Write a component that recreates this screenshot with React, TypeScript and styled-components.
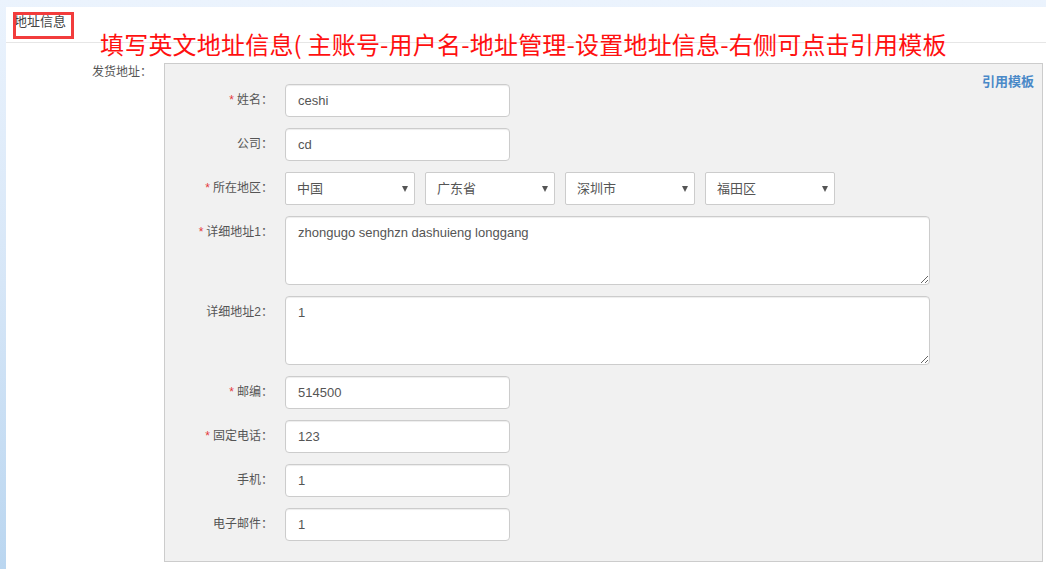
import styled, { createGlobalStyle } from 'styled-components';

const GlobalStyle = createGlobalStyle`
  html, body {
    margin: 0;
    padding: 0;
  }
  body {
    width: 1046px;
    height: 569px;
    overflow: hidden;
    background: linear-gradient(to bottom, #ebf3fd 0%, #d6e6f7 50%, #bad6f0 100%);
    font-family: "Liberation Sans", "Noto Sans CJK SC", sans-serif;
    font-size: 12px;
    color: #555;
  }
  * {
    box-sizing: border-box;
  }
`;

interface Field {
  label: string;
  required?: boolean;
  kind: 'input' | 'textarea' | 'region';
  value?: string;
}

const FIELDS: Field[] = [
  { label: '姓名', required: true, kind: 'input', value: 'ceshi' },
  { label: '公司', kind: 'input', value: 'cd' },
  { label: '所在地区', required: true, kind: 'region' },
  { label: '详细地址1', required: true, kind: 'textarea', value: 'zhongugo senghzn dashuieng longgang' },
  { label: '详细地址2', kind: 'textarea', value: '1' },
  { label: '邮编', required: true, kind: 'input', value: '514500' },
  { label: '固定电话', required: true, kind: 'input', value: '123' },
  { label: '手机', kind: 'input', value: '1' },
  { label: '电子邮件', kind: 'input', value: '1' },
];

const REGIONS = ['中国', '广东省', '深圳市', '福田区'];

const App = () => {
  return (
    <>
      <GlobalStyle />
      <Page>
        <Header>
          <Title>{'地址信息'}</Title>
        </Header>
        <HighlightBox />
        <Annotation>{'填写英文地址信息( 主账号-用户名-地址管理-设置地址信息-右侧可点击引用模板'}</Annotation>
        <Content>
          <SectionLabel>{'发货地址：'}</SectionLabel>
          <Panel>
            <TemplateLink href="#">{'引用模板'}</TemplateLink>
            {FIELDS.map((field) => (
              <FormRow key={field.label}>
                <Label>
                  {field.required && <Star>{'*'}</Star>}
                  {`${field.label}：`}
                </Label>
                {field.kind === 'input' && (
                  <TextInput defaultValue={field.value} />
                )}
                {field.kind === 'textarea' && (
                  <TextArea defaultValue={field.value} />
                )}
                {field.kind === 'region' && (
                  <RegionList>
                    {REGIONS.map((region) => (
                      <SelectWrap key={region}>
                        <Select defaultValue={region}>
                          <option value={region}>{region}</option>
                        </Select>
                      </SelectWrap>
                    ))}
                  </RegionList>
                )}
              </FormRow>
            ))}
          </Panel>
        </Content>
      </Page>
    </>
  );
};

export default App;


const Page = styled.div`
  position: relative;
  margin: 7px 0 0 6px;
  height: 562px;
  background: #ffffff;
`;

const Header = styled.div`
  height: 36px;
  border-bottom: 1px solid #e6e6e6;
  padding: 6px 0 0 8px;
`;

const Title = styled.span`
  font-size: 13px;
  line-height: 18px;
  color: #444;
`;

const HighlightBox = styled.div`
  position: absolute;
  left: 7px;
  top: 5px;
  width: 61px;
  height: 27px;
  border: 3px solid #f23c3c;
`;

const Annotation = styled.div`
  position: absolute;
  left: 94px;
  top: 22px;
  font-family: "Noto Sans CJK SC", sans-serif;
  font-size: 24px;
  line-height: 30px;
  color: #ff1010;
  white-space: nowrap;
  letter-spacing: 0.2px;
`;

const Content = styled.div`
  display: flex;
  align-items: flex-start;
  padding: 20px 3px 0 0;
`;

const SectionLabel = styled.div`
  width: 158px;
  flex-shrink: 0;
  padding: 1px 12px 0 0;
  text-align: right;
  font-size: 12px;
  line-height: 16px;
  color: #555;
`;

const Panel = styled.div`
  position: relative;
  flex: 1;
  display: flex;
  flex-direction: column;
  gap: 11px;
  background: #f1f1f1;
  border: 1px solid #cccccc;
  padding: 20px 0 20px 0;
`;

const TemplateLink = styled.a`
  position: absolute;
  top: 9px;
  right: 8px;
  font-size: 13px;
  font-weight: 700;
  line-height: 18px;
  color: #4a89c8;
  text-decoration: none;
`;

const FormRow = styled.div`
  display: grid;
  grid-template-columns: 108px 1fr;
  column-gap: 12px;
  align-items: start;
`;

const Label = styled.label`
  text-align: right;
  font-size: 12px;
  line-height: 33px;
  color: #555;
  white-space: nowrap;
`;

const Star = styled.span`
  color: #e4393c;
  margin-right: 3px;
`;

const TextInput = styled.input`
  width: 225px;
  height: 33px;
  padding: 0 12px;
  border: 1px solid #cccccc;
  border-radius: 4px;
  background: #ffffff;
  box-shadow: inset 0 1px 1px rgba(0, 0, 0, 0.075);
  font-family: "Liberation Sans", "Noto Sans CJK SC", sans-serif;
  font-size: 13px;
  color: #555;
  outline: none;
`;

const TextArea = styled.textarea`
  display: block;
  width: 645px;
  height: 69px;
  padding: 6px 12px;
  border: 1px solid #cccccc;
  border-radius: 4px;
  background: #ffffff;
  box-shadow: inset 0 1px 1px rgba(0, 0, 0, 0.075);
  font-family: "Liberation Sans", "Noto Sans CJK SC", sans-serif;
  font-size: 13px;
  line-height: 20px;
  color: #555;
  outline: none;
  resize: both;
`;

const RegionList = styled.div`
  display: flex;
  gap: 10px;
`;

const SelectWrap = styled.div`
  position: relative;
  width: 130px;
  height: 33px;

  &::after {
    content: "";
    position: absolute;
    right: 7px;
    top: 14px;
    border-left: 3.5px solid transparent;
    border-right: 3.5px solid transparent;
    border-top: 6px solid #555;
    pointer-events: none;
  }
`;

const Select = styled.select`
  appearance: none;
  -webkit-appearance: none;
  width: 100%;
  height: 100%;
  padding: 0 20px 0 11px;
  border: 1px solid #cccccc;
  border-radius: 2px;
  background: #ffffff;
  font-family: "Liberation Sans", "Noto Sans CJK SC", sans-serif;
  font-size: 13px;
  color: #555;
  outline: none;
`;
